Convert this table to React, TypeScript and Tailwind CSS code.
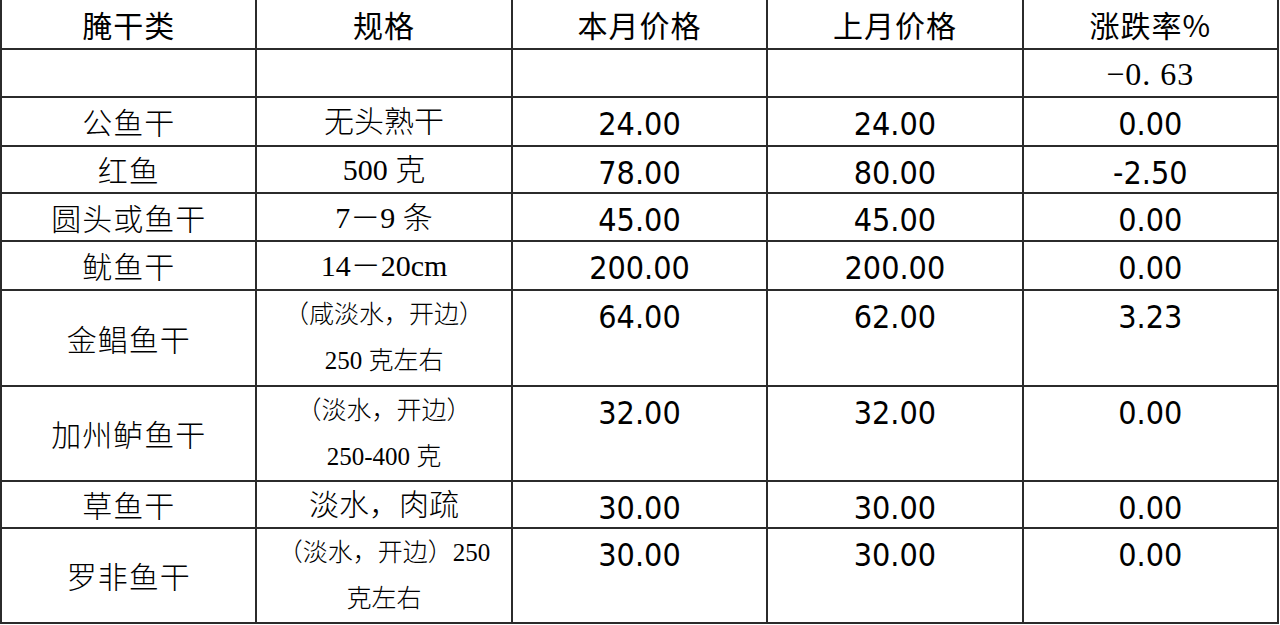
import React from 'react';

type Row = {
  name: string;
  spec: string[];
  cur: string;
  prev: string;
  rate: string;
  h: string;
  small?: boolean;
};

const ROWS: Row[] = [
  { name: '公鱼干', spec: ['无头熟干'], cur: '24.00', prev: '24.00', rate: '0.00', h: 'h-[49px]' },
  { name: '红鱼', spec: ['500 克'], cur: '78.00', prev: '80.00', rate: '-2.50', h: 'h-[47px]' },
  { name: '圆头或鱼干', spec: ['7－9 条'], cur: '45.00', prev: '45.00', rate: '0.00', h: 'h-[48px]' },
  { name: '鱿鱼干', spec: ['14－20cm'], cur: '200.00', prev: '200.00', rate: '0.00', h: 'h-[49px]' },
  {
    name: '金鲳鱼干',
    spec: ['（咸淡水，开边）', '250 克左右'],
    cur: '64.00',
    prev: '62.00',
    rate: '3.23',
    h: 'h-[96px]',
    small: true,
  },
  {
    name: '加州鲈鱼干',
    spec: ['（淡水，开边）', '250-400 克'],
    cur: '32.00',
    prev: '32.00',
    rate: '0.00',
    h: 'h-[95px]',
    small: true,
  },
  { name: '草鱼干', spec: ['淡水，肉疏'], cur: '30.00', prev: '30.00', rate: '0.00', h: 'h-[47px]' },
  {
    name: '罗非鱼干',
    spec: ['（淡水，开边）250', '克左右'],
    cur: '30.00',
    prev: '30.00',
    rate: '0.00',
    h: 'h-[95px]',
    small: true,
  },
];

const HEAD = ['腌干类', '规格', '本月价格', '上月价格', '涨跌率%'];

const cell = 'border-b-2 border-r-2 border-[#2b2b2b]';
const cjk = "font-['Noto_Sans_CJK_SC',sans-serif]";
const serif = "font-['Liberation_Serif','Noto_Sans_CJK_SC',serif]";
const num =
  "font-['DejaVu_Sans_Condensed','Liberation_Sans_Narrow','DejaVu_Sans',sans-serif] [font-stretch:condensed]";

export default function App() {
  return (
    <div className="min-h-screen bg-white text-black">
      <div className="grid w-[1279px] grid-cols-5 border-l-2 border-[#2b2b2b]">
        {/* header */}
        {HEAD.map((t) => (
          <div
            key={t}
            className={`${cell} ${cjk} flex h-[50px] items-center justify-center text-[30px] tracking-[1px]`}
          >
            {t}
          </div>
        ))}

        {/* overall row */}
        {[0, 1, 2, 3].map((i) => (
          <div key={i} className={`${cell} h-[48px]`} />
        ))}
        <div className={`${cell} ${serif} flex h-[48px] items-center justify-center pt-[2px] text-[32px] tracking-[1px]`}>
          −0. 63
        </div>

        {ROWS.map((r) => (
          <React.Fragment key={r.name}>
            <div className={`${cell} ${cjk} ${r.h} flex items-center justify-center text-[30px] font-light tracking-[1px]`}>
              {r.name}
            </div>
            <div
              className={`${cell} ${serif} ${r.h} flex flex-col items-center justify-center font-light ${
                r.small ? 'text-[25px] leading-[46px]' : 'text-[30px]'
              }`}
            >
              {r.spec.map((s) => (
                <span key={s}>{s}</span>
              ))}
            </div>
            <div className={`${cell} ${num} ${r.h} pt-[2px] text-center text-[32px] leading-[48px]`}>{r.cur}</div>
            <div className={`${cell} ${num} ${r.h} pt-[2px] text-center text-[32px] leading-[48px]`}>{r.prev}</div>
            <div className={`${cell} ${num} ${r.h} pt-[2px] text-center text-[32px] leading-[48px]`}>{r.rate}</div>
          </React.Fragment>
        ))}
      </div>
    </div>
  );
}
